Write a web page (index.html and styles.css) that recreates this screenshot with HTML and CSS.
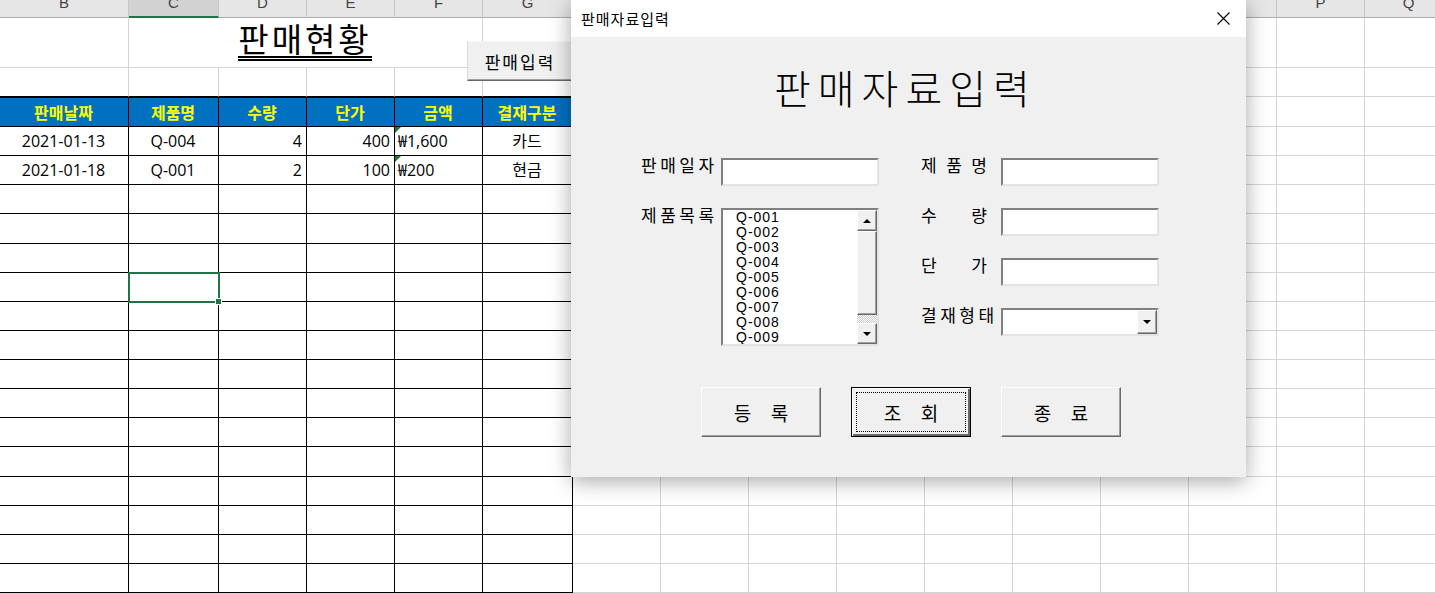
FILE: index.html
```html
<!DOCTYPE html>
<html lang="ko">
<head>
  <meta charset="UTF-8" />
  <meta name="viewport" content="width=device-width, initial-scale=1.0" />
  <title>판매현황</title>
  <link rel="stylesheet" href="styles.css">
</head>
<body>
  <div class="sheet">
    <div class="col-heads" id="colHeads"></div>
    <div class="cells" id="cells"></div>

    <button class="sheet-btn">판매입력</button>

    <div class="dialog">
      <div class="dlg-title">
        <span>판매자료입력</span>
        <svg class="dlg-close" viewBox="0 0 13 13" width="13" height="13">
          <path d="M0.5 0.5 L12.5 12.5 M12.5 0.5 L0.5 12.5" stroke="#000" stroke-width="1.1" fill="none" />
        </svg>
      </div>

      <div class="dlg-body">
        <h1 class="dlg-heading">판매자료입력</h1>

        <div class="dlg-form">
          <div class="form-col">
            <div class="field">
              <label>판매일자</label>
              <input type="text" class="tb" />
            </div>
            <div class="field">
              <label>제품목록</label>
              <div class="listbox">
                <ul class="list-items">
                  <li>Q-001</li><li>Q-002</li><li>Q-003</li>
                  <li>Q-004</li><li>Q-005</li><li>Q-006</li>
                  <li>Q-007</li><li>Q-008</li><li>Q-009</li>
                </ul>
                <div class="scrollbar">
                  <div class="sb-btn up"><i class="arrow-up"></i></div>
                  <div class="sb-thumb"></div>
                  <div class="sb-track"></div>
                  <div class="sb-btn down"><i class="arrow-down"></i></div>
                </div>
              </div>
            </div>
          </div>

          <div class="form-col">
            <div class="field">
              <label class="spread">제 품 명</label>
              <input type="text" class="tb" />
            </div>
            <div class="field">
              <label class="spread">수 량</label>
              <input type="text" class="tb" />
            </div>
            <div class="field">
              <label class="spread">단 가</label>
              <input type="text" class="tb" />
            </div>
            <div class="field">
              <label>결재형태</label>
              <div class="combo">
                <div class="drop-btn"><i class="arrow-down"></i></div>
              </div>
            </div>
          </div>
        </div>

        <div class="dlg-buttons">
          <button class="dlg-btn">등 록</button>
          <button class="dlg-btn default">조 회</button>
          <button class="dlg-btn">종 료</button>
        </div>
      </div>
    </div>
  </div>

  <script>
    const cols = ['B','C','D','E','F','G','H','I','J','K','L','M','N','O','P','Q'];
    const heads = document.getElementById('colHeads');
    cols.forEach(c => {
      heads.insertAdjacentHTML('beforeend', `<div class="col-head${c === 'C' ? ' active' : ''}">${c}</div>`);
    });

    const sales = [
      ['2021-01-13', 'Q-004', '4', '400', '₩1,600', '카드'],
      ['2021-01-18', 'Q-001', '2', '100', '₩200', '현금']
    ];
    const align = ['c', 'c', 'r', 'r', 'l flag', 'c'];
    const blank = n => '<div class="cell"></div>'.repeat(n);

    let html = '';
    // row 1 : merged title C-F
    html += '<div class="cell"></div><div class="cell title"><span>판매현황</span></div><div class="cell"></div>' + blank(10);
    // row 2
    html += '<div class="cell tb-top"></div>'.repeat(6) + blank(10);
    // table header
    ['판매날짜', '제품명', '수량', '단가', '금액', '결재구분'].forEach(h => {
      html += `<div class="cell th">${h}</div>`;
    });
    html += blank(10);
    // table body
    for (let i = 0; i < 17; i++) {
      const r = sales[i];
      for (let j = 0; j < 6; j++) {
        let cls = 'cell td';
        if (r) cls += ' ' + align[j];
        if (i === 5 && j === 1) cls += ' selected';
        html += `<div class="${cls}">${r ? r[j] : ''}</div>`;
      }
      html += blank(10);
    }
    document.getElementById('cells').innerHTML = html;
  </script>
</body>
</html>
```

FILE: styles.css
```css
html, body {
  margin: 0;
  overflow: hidden;
}
body {
  font-family: "Open Sans", "Noto Sans CJK KR", sans-serif;
  background: #fff;
  color: #000;
}
.sheet {
  position: relative;
  width: 1435px;
  height: 593px;
  overflow: hidden;
}

/* column letters */
.col-heads, .cells {
  display: grid;
  grid-template-columns: 129px 90px 88px 88px 88px 90px repeat(10, 88px);
}
.col-heads {
  height: 18px;
  background: #e6e6e6;
}
.col-head {
  box-sizing: border-box;
  border-right: 1px solid #c6c6c6;
  border-bottom: 1px solid #ababab;
  overflow: hidden;
  text-align: center;
  font: 15px "Liberation Sans", sans-serif;
  line-height: 6px;
  color: #444;
}
.col-head.active {
  background: #d2d2d2;
  border-bottom: 2px solid #217346;
}

/* cells */
.cells {
  grid-template-rows: 50px 29px 30px;
  grid-auto-rows: 29.125px;
}
.cell {
  box-sizing: border-box;
  border-right: 1px solid #d4d4d4;
  border-bottom: 1px solid #d4d4d4;
  display: flex;
  align-items: center;
  padding: 0 4px 0 3px;
  font-size: 16px;
  line-height: 1;
  white-space: nowrap;
  position: relative;
}
.cell.title {
  grid-column: span 4;
  justify-content: center;
  align-items: flex-end;
  padding-bottom: 6px;
}
.title span {
  font-family: "Noto Sans CJK KR", sans-serif;
  font-size: 33px;
  line-height: 32px;
  letter-spacing: 3px;
  padding-bottom: 2px;
  border-bottom: 5px double #000;
}
.tb-top { border-bottom-color: #000; }
.th {
  background: #0070c0;
  color: #ffff00;
  font-family: "Noto Sans CJK KR", sans-serif;
  font-weight: bold;
  justify-content: center;
  border-top: 1px solid #000;
  border-right-color: #000;
  border-bottom-color: #000;
}
.td {
  border-right-color: #000;
  border-bottom-color: #000;
}
.c { justify-content: center; }
.r { justify-content: flex-end; }
.l { justify-content: flex-start; }
.flag::before {
  content: "";
  position: absolute;
  left: 0;
  top: 0;
  border-top: 6px solid #1f7a2e;
  border-right: 6px solid transparent;
}
.selected {
  outline: 2px solid #217346;
  outline-offset: -1px;
  z-index: 1;
}
.selected::after {
  content: "";
  position: absolute;
  right: -4px;
  bottom: -4px;
  width: 5px;
  height: 5px;
  background: #217346;
  border: 1px solid #fff;
}

/* button on the sheet */
.sheet-btn {
  position: absolute;
  left: 467px;
  top: 41px;
  width: 106px;
  height: 40px;
  padding: 0;
  background: #f0f0f0;
  border: 1px solid;
  border-color: #f7f7f7 #696969 #696969 #dadada;
  box-shadow: inset 0 -1px #a0a0a0;
  font: 17px "Noto Sans CJK KR", sans-serif;
  letter-spacing: 2px;
  color: #000;
}

/* dialog window */
.dialog {
  position: absolute;
  left: 571px;
  top: 0;
  width: 675px;
  height: 477px;
  background: #f0f0f0;
  box-shadow: 0 4px 20px rgba(0, 0, 0, 0.35);
  font-family: "Noto Sans CJK KR", sans-serif;
  z-index: 5;
}
.dlg-title {
  height: 37px;
  background: #fff;
  display: flex;
  align-items: center;
  justify-content: space-between;
  padding: 0 16px 0 10px;
  font-size: 15px;
  letter-spacing: 1px;
  line-height: 37px;
}
.dlg-close { display: block; }
.dlg-heading {
  margin: 0;
  padding: 26px 0 0 203px;
  font-size: 40px;
  font-weight: 300;
  line-height: 48px;
  letter-spacing: 7px;
}
.dlg-form {
  display: flex;
  align-items: flex-start;
  gap: 42px;
  margin-top: 47px;
  padding-left: 70px;
}
.form-col {
  display: flex;
  flex-direction: column;
  gap: 22px;
}
.field {
  display: flex;
  align-items: flex-start;
}
.field label {
  flex: none;
  width: 80px;
  font-size: 17px;
  line-height: 14px;
  letter-spacing: 3.5px;
}
.field label.spread {
  width: 66px;
  margin-right: 14px;
  letter-spacing: 0;
  text-align: justify;
  text-align-last: justify;
}
.tb, .combo, .listbox {
  box-sizing: border-box;
  width: 158px;
  border: 2px solid;
  border-color: #808080 #e3e3e3 #e3e3e3 #808080;
  background: #fff;
}
.tb {
  height: 28px;
  margin: 0;
  padding: 0;
}
.combo {
  height: 28px;
  display: flex;
  justify-content: flex-end;
}
.drop-btn, .sb-btn, .sb-thumb {
  box-sizing: border-box;
  background: #f0f0f0;
  border: 1px solid;
  border-color: #fff #696969 #696969 #fff;
  box-shadow: inset -1px -1px #a0a0a0;
}
.drop-btn {
  width: 20px;
  display: flex;
  align-items: center;
  justify-content: center;
}
.arrow-up, .arrow-down {
  display: block;
  width: 0;
  height: 0;
  border-left: 4px solid transparent;
  border-right: 4px solid transparent;
}
.arrow-up { border-bottom: 4px solid #000; }
.arrow-down { border-top: 4px solid #000; }

/* list box */
.listbox {
  height: 138px;
  display: flex;
}
.list-items {
  flex: 1;
  margin: 0;
  padding: 0 0 0 13px;
  list-style: none;
  overflow: hidden;
  font: 14px/15px "Liberation Sans", sans-serif;
  letter-spacing: 1px;
  color: #000;
}
.scrollbar {
  width: 20px;
  display: flex;
  flex-direction: column;
}
.sb-btn {
  height: 21px;
  display: flex;
  align-items: center;
  justify-content: center;
}
.sb-thumb { height: 84px; }
.sb-track {
  flex: 1;
  background: repeating-conic-gradient(#c8c8c8 0 25%, #fff 0 50%) 0 0 / 2px 2px;
}

/* command buttons */
.dlg-buttons {
  display: flex;
  gap: 30px;
  margin-top: 41px;
  padding-left: 130px;
}
.dlg-btn {
  width: 120px;
  height: 50px;
  padding: 0;
  background: #f0f0f0;
  border: 1px solid;
  border-color: #fff #696969 #696969 #fff;
  box-shadow: inset -1px -1px #a0a0a0;
  font: 19px "Noto Sans CJK KR", sans-serif;
  word-spacing: 14px;
  color: #000;
}
.dlg-btn.default {
  border-color: #000;
  box-shadow: inset 1px 1px #fff, inset -2px -2px #696969;
  outline: 1px dotted #000;
  outline-offset: -6px;
}
```
